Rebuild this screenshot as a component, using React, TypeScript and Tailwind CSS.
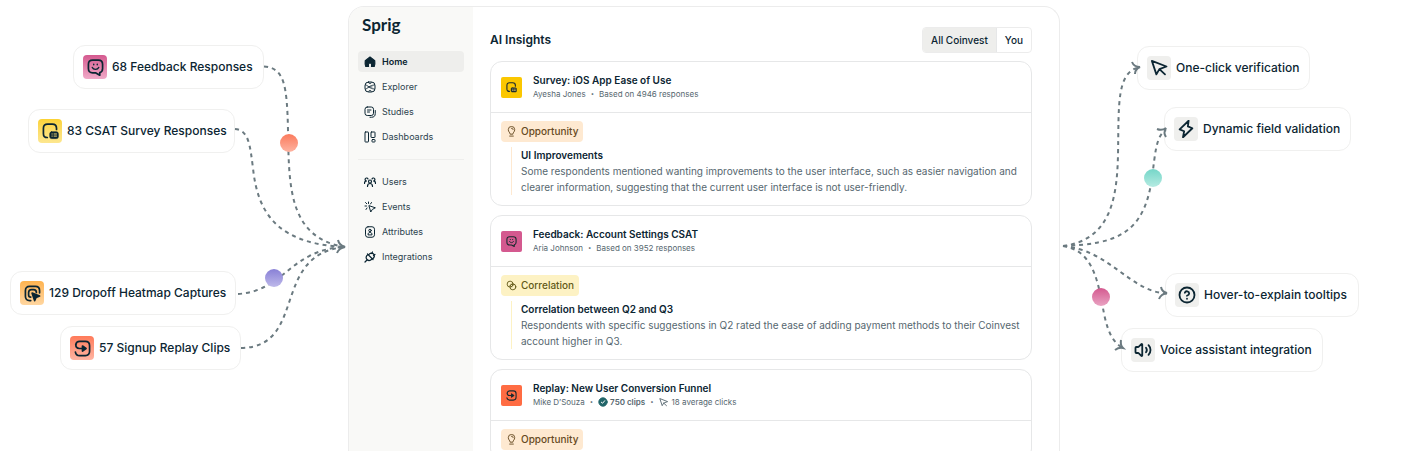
import type { ReactNode } from "react";
import { CircleHelp, Volume2 } from "lucide-react";

type IconProps = { className?: string };

function Svg({ className, children }: { className?: string; children: ReactNode }) {
  return (
    <svg
      viewBox="0 0 24 24"
      fill="none"
      stroke="currentColor"
      strokeWidth={2.4}
      strokeLinecap="round"
      strokeLinejoin="round"
      className={className}
      aria-hidden="true"
    >
      {children}
    </svg>
  );
}

const FeedbackIcon = ({ className }: IconProps) => (
  <Svg className={className}>
    <path d="M12 19.500H8c-4 0-6-2-6-6V7.500c0-4 2-6 6-6h8c4 0 6 2 6 6v6c0 3.500-1.500 5.300-4 5.800V23z" />
    <path d="M7.500 12c1.500 3.500 7.500 3.500 9 0M9.500 7.500v.5M14.500 7.500v.5" strokeWidth={2} />
  </Svg>
);

const SurveyIcon = ({ className }: IconProps) => (
  <Svg className={className}>
    <path d="M7.500 20.500C3.500 20.500 2 18.500 2 15V7.500c0-4 2-6 6-6h6.500c4 0 6 2 6 6V9" />
    <rect x="11" y="12.500" width="12" height="9.500" rx="2.500" fill="currentColor" strokeWidth={1} />
    <path d="M14 15.500h.5M14 18.500h.5M17 15.500h3.500M17 18.500h3.500" stroke="#ffe27a" strokeWidth={1.3} />
  </Svg>
);

const HeatmapIcon = ({ className }: IconProps) => (
  <Svg className={className}>
    <path d="M9.500 22H8c-4 0-6-2-6-6V8c0-4 2-6 6-6h8c4 0 6 2 6 6v3" />
    <path d="M9.500 17C7.500 17 6.500 16 6.500 14v-3.500c0-2.500 1.500-4 4-4h3c2.500 0 4 1.500 4 4" />
    <path d="m11.500 11.500 3.500 10.500 2-4.500 5-2z" fill="currentColor" />
  </Svg>
);

const ReplayIcon = ({ className }: IconProps) => (
  <Svg className={className}>
    <path d="M2.500 6.500C3 3.500 4.500 2 8 2h8c4 0 6 2 6 6v8c0 4-2 6-6 6H8c-3.500 0-5.500-1.500-6-5" />
    <path d="M2.500 6.500C2.500 10.500 4 12 7.500 12H12" />
    <path d="m12 8.500 5 3.500-5 3.500z" fill="currentColor" />
  </Svg>
);

const CursorIcon = ({ className }: IconProps) => (
  <Svg className={className}>
    <path d="m2.500 2.500 6 18 4-7L22 10zM12.500 13.500l7.500 7" />
  </Svg>
);

const ZapIcon = ({ className }: IconProps) => (
  <Svg className={className}>
    <path d="M15.500 1 3.500 12.500l6 2.500-1.500 8L20.500 11l-6-2.500z" />
  </Svg>
);

const HelpIcon = ({ className }: IconProps) => <CircleHelp className={className} strokeWidth={2.4} />;

const VoiceIcon = ({ className }: IconProps) => <Volume2 className={className} strokeWidth={2.4} />;

const CheckBadge = ({ className }: IconProps) => (
  <Svg className={className}>
    <circle cx="12" cy="12" r="10" fill="currentColor" />
    <path d="m8 12.500 3 2.500 5-6" stroke="#fff" />
  </Svg>
);

const HomeIcon = ({ className }: IconProps) => (
  <Svg className={className}>
    <path
      d="M12 2 2.500 9.500C2 14 2 18 3.500 21H9c-1-5 .5-7 3-7s4 2 3 7h5.500c1.500-3 1.500-7 1-11.500z"
      fill="currentColor"
    />
  </Svg>
);

const ExplorerIcon = ({ className }: IconProps) => (
  <Svg className={className}>
    <rect x="2" y="2" width="20" height="20" rx="7" strokeWidth={2} />
    <path d="M3 8c6 0 7 8 18 8M3 16c5 0 7-8 18-8M8 12h8M9 3c0 3 6 3 6 0M9 21c0-3 6-3 6 0" strokeWidth={1.6} />
  </Svg>
);

const StudiesIcon = ({ className }: IconProps) => (
  <Svg className={className}>
    <rect x="2" y="2" width="17" height="17" rx="4.500" strokeWidth={2} />
    <path d="M7 8h7M7 12h4M22.500 9v6c0 5-2.500 7.500-7.500 7.500h-3" strokeWidth={2} />
  </Svg>
);

const DashboardsIcon = ({ className }: IconProps) => (
  <Svg className={className}>
    <g strokeWidth={2}>
      <rect x="2" y="2" width="7" height="20" rx="1" />
      <rect x="14" y="2" width="8" height="11" rx="1" />
      <rect x="16" y="17" width="6" height="5" rx="1" />
    </g>
  </Svg>
);

const UsersIcon = ({ className }: IconProps) => (
  <Svg className={className}>
    <circle cx="12" cy="11" r="3" />
    <path d="M7 21c0-4 2-6 5-6s5 2 5 6M1 15c0-3 1-5 4-5M23 15c0-3-1-5-4-5M8 6a3 3 0 1 0-3 4M16 6a3 3 0 1 1 3 4" />
  </Svg>
);

const EventsIcon = ({ className }: IconProps) => (
  <Svg className={className}>
    <path d="m10 10 3.500 12 3-5 5.500-3zM9 2v3M3 3l2.500 2.500M2 10h3M15 3l-2 3M4 17l2-3" strokeWidth={2} />
  </Svg>
);

const AttributesIcon = ({ className }: IconProps) => (
  <Svg className={className}>
    <g strokeWidth={2}>
      <rect x="3" y="1.500" width="18" height="21" rx="5" />
      <circle cx="12" cy="9" r="2.500" />
      <path d="M8 17c0-3 1.500-4 4-4s4 1 4 4z" />
    </g>
  </Svg>
);

const IntegrationsIcon = ({ className }: IconProps) => (
  <Svg className={className}>
    <path d="m2 22 4.500-4.500M15 5l2-3M19 9l3-2M7 6l11 11M9 8c3-4 7-5 10-2s2 7-2 10M8 7c-4 3-5 7-2 10s7 2 10-1" />
  </Svg>
);

const BulbIcon = ({ className }: IconProps) => (
  <Svg className={className}>
    <path d="M9 17c0-3-4-4-4-9a7 7 0 0 1 14 0c0 5-4 6-4 9zM8 22h8M12 5c2 0 3.500 1 3.500 3" strokeWidth={2} />
  </Svg>
);

const CorrelationIcon = ({ className }: IconProps) => (
  <Svg className={className}>
    <g strokeWidth={2}>
      <circle cx="9" cy="9" r="6.500" />
      <circle cx="15" cy="15" r="6.500" />
      <path d="m9 12 3 3M12 9l3 3" />
    </g>
  </Svg>
);

const chip =
  "absolute flex h-11 items-center gap-[5px] whitespace-nowrap rounded-xl border border-[#f0f0ef] bg-white pl-[9px] text-xs font-medium text-[#0b2532]";

const sources = [
  { label: "68 Feedback Responses", Icon: FeedbackIcon, box: "left-[73px] top-[45px] w-[191px]", tile: "from-[#d4598f] to-[#f0a9c8]" },
  { label: "83 CSAT Survey Responses", Icon: SurveyIcon, box: "left-[28px] top-[109px] w-[207px]", tile: "from-[#fbd233] to-[#fde78f]" },
  { label: "129 Dropoff Heatmap Captures", Icon: HeatmapIcon, box: "left-[10px] top-[271px] w-[226px]", tile: "from-[#ffb34d] to-[#ffd6a0]" },
  { label: "57 Signup Replay Clips", Icon: ReplayIcon, box: "left-[60px] top-[326px] w-[181px]", tile: "from-[#ff7a59] to-[#ffb5a3]" },
];

const outcomes = [
  { label: "One-click verification", Icon: CursorIcon, box: "left-[77px] top-[46px] w-[173px]" },
  { label: "Dynamic field validation", Icon: ZapIcon, box: "left-[104px] top-[107px] w-[187px]" },
  { label: "Hover-to-explain tooltips", Icon: HelpIcon, box: "left-[105px] top-[273px] w-[194px]" },
  { label: "Voice assistant integration", Icon: VoiceIcon, box: "left-[61px] top-[328px] w-[202px]" },
];

const primaryNav = [
  { label: "Home", Icon: HomeIcon, active: true },
  { label: "Explorer", Icon: ExplorerIcon },
  { label: "Studies", Icon: StudiesIcon },
  { label: "Dashboards", Icon: DashboardsIcon },
];

const secondaryNav = [
  { label: "Users", Icon: UsersIcon },
  { label: "Events", Icon: EventsIcon },
  { label: "Attributes", Icon: AttributesIcon },
  { label: "Integrations", Icon: IntegrationsIcon },
];

function Dot({ id, cx, cy, from, to }: { id: string; cx: number; cy: number; from: string; to: string }) {
  return (
    <>
      <linearGradient id={id} x1="0" y1="0" x2="0" y2="1">
        <stop stopColor={from} />
        <stop offset="1" stopColor={to} />
      </linearGradient>
      <circle cx={cx} cy={cy} r="9" fill={`url(#${id})`} stroke="none" />
    </>
  );
}

function Sources() {
  return (
    <section className="relative ml-auto h-full w-[348px]" aria-label="Sources">
      {sources.map(({ label, Icon, box, tile }) => (
        <div key={label} className={`${chip} ${box}`}>
          <span className={`flex size-6 shrink-0 items-center justify-center rounded bg-linear-to-b ${tile}`}>
            <Icon className="size-[17px]" />
          </span>
          {label}
        </div>
      ))}
      <svg viewBox="0 0 348 451" className="absolute left-0 top-0 h-[451px] w-[348px]" fill="none" stroke="#6b7a80" strokeWidth="2" aria-hidden="true">
        <g strokeDasharray="4 4">
          <path d="M264 66.500C284 68 287 84 288 130C289 185 288 238 345 247" />
          <path d="M235 129C249 130 250 146 253 168C258 218 282 244 345 247" />
          <path d="M238 294C285 291 290 249 345 247" />
          <path d="M241 348C308 347 270 254 345 247" />
        </g>
        <path d="M338 240q1 5 7 7q-6 1-8 6" />
        <Dot id="dot-orange" cx={289} cy={143} from="#fb7a5c" to="#feb3a1" />
        <Dot id="dot-violet" cx={274} cy={278} from="#8880d6" to="#beb9ea" />
      </svg>
    </section>
  );
}

function Outcomes() {
  return (
    <section className="relative h-full w-[348px]" aria-label="Outcomes">
      {outcomes.map(({ label, Icon, box }) => (
        <div key={label} className={`${chip} ${box}`}>
          <span className="flex size-6 shrink-0 items-center justify-center rounded bg-[#efefed]">
            <Icon className="size-[18px]" />
          </span>
          {label}
        </div>
      ))}
      <svg viewBox="0 0 348 451" className="absolute left-0 top-0 h-[451px] w-[348px]" fill="none" stroke="#6b7a80" strokeWidth="2" aria-hidden="true">
        <g strokeDasharray="4 4">
          <path d="M3 246C52 240 57 195 58 155C59 105 56 72 80 67" />
          <path d="M3 246C55 244 84 235 92 178C95 155 96 135 106 130" />
          <path d="M3 246C50 250 70 292 107 293.500" />
          <path d="M3 246C30 250 36 275 41 297C45 320 48 340 63 348" />
        </g>
        <path d="M72 62q2 5 8 5q-5 2-5 7" />
        <path d="M97 129q5 2 9-1q-3 5 0 9" />
        <path d="M101 287q1 5 6 6q-6 1-8 6" />
        <path d="M61 340q-1 5 2 8q-4-1-8 2" />
        <Dot id="dot-teal" cx={93} cy={178} from="#75d6c8" to="#b5ebe2" />
        <Dot id="dot-pink" cx={41} cy={297} from="#d4598f" to="#e9a3c2" />
      </svg>
    </section>
  );
}

function NavLinks({ items }: { items: { label: string; Icon: (props: IconProps) => ReactNode; active?: boolean }[] }) {
  return (
    <ul className="flex flex-col gap-1">
      {items.map(({ label, Icon, active }) => (
        <li key={label}>
          <a
            href="#"
            aria-current={active ? "page" : undefined}
            className={`flex h-[21px] items-center gap-1.5 rounded-sm pl-1.5 text-[9px] ${
              active ? "bg-[#eeeeec] font-semibold text-[#0b2532]" : "text-[#2c434e]"
            }`}
          >
            <Icon className="size-3 text-[#0b2532]" />
            {label}
          </a>
        </li>
      ))}
    </ul>
  );
}

const Separator = () => <span className="text-[6px]">•</span>;

function InsightCard({
  title,
  meta,
  icon,
  tile,
  tag,
  heading,
  body,
}: {
  title: string;
  meta: ReactNode;
  icon: ReactNode;
  tile: string;
  tag: "Opportunity" | "Correlation";
  heading?: string;
  body?: string;
}) {
  const opportunity = tag === "Opportunity";

  return (
    <article className="shrink-0 rounded-xl border border-[#e6e7e8]">
      <header className="flex h-[51px] items-center gap-[11px] border-b border-[#e6e7e8] pl-2.5">
        <span className={`flex size-[21px] items-center justify-center rounded-xs text-[#1c2b30] ${tile}`}>{icon}</span>
        <div>
          <h2 className="text-[10px] leading-[14px] font-semibold text-[#0b2532]">{title}</h2>
          <p className="flex items-center gap-[5px] text-[8px] leading-[14px] text-[#56676f]">{meta}</p>
        </div>
      </header>
      <div className="px-2.5 pt-2 pb-2.5">
        <span
          className={`flex h-[21px] w-fit items-center gap-1 rounded px-[5px] text-[10px] font-medium ${
            opportunity ? "bg-[#fee9d1] text-[#664a22]" : "bg-[#fdf2c4] text-[#625a18]"
          }`}
        >
          {opportunity ? <BulbIcon className="size-[11px]" /> : <CorrelationIcon className="size-[11px]" />}
          {tag}
        </span>
        {heading && (
          <div className={`mt-[5px] ml-2.5 border-l pl-[9px] ${opportunity ? "border-[#fee9d1]" : "border-[#fdf2c4]"}`}>
            <h3 className="text-[10px] leading-4 font-semibold text-[#0b2532]">{heading}</h3>
            <p className="text-[10px] leading-4 text-[#56676f]">{body}</p>
          </div>
        )}
      </div>
    </article>
  );
}

function Dashboard() {
  return (
    <div className="mt-1.5 flex overflow-hidden rounded-t-2xl border border-b-0 border-[#ececec]">
      <aside className="w-[124px] shrink-0 bg-[#f9f9f7] px-[9px] pt-2">
        <div className="pl-1 font-['Lato'] text-[17px] leading-5 font-bold text-[#0b2532]">Sprig</div>
        <nav className="mt-4">
          <NavLinks items={primaryNav} />
          <hr className="mt-3 mb-[11px] border-[#eeeeec]" />
          <NavLinks items={secondaryNav} />
        </nav>
      </aside>
      <main className="flex min-w-0 flex-1 flex-col pr-[27px] pl-[17px]">
        <div className="mt-5 mb-2 flex h-[26px] shrink-0 items-center justify-between">
          <h1 className="text-xs font-semibold text-[#0b2532]">AI Insights</h1>
          <div className="flex h-full overflow-hidden rounded border border-[#ececec] text-[10px] font-medium text-[#0b2532]">
            <button type="button" className="border-r border-[#e6e7e8] bg-[#eeeeec] px-2">
              All Coinvest
            </button>
            <button type="button" className="px-2">
              You
            </button>
          </div>
        </div>
        <div className="flex min-h-0 flex-1 flex-col gap-[9px]">
          <InsightCard
            title="Survey: iOS App Ease of Use"
            meta={
              <>
                Ayesha Jones <Separator /> Based on 4946 responses
              </>
            }
            icon={<SurveyIcon className="size-[11px]" />}
            tile="bg-[#fbc700]"
            tag="Opportunity"
            heading="UI Improvements"
            body="Some respondents mentioned wanting improvements to the user interface, such as easier navigation and clearer information, suggesting that the current user interface is not user-friendly."
          />
          <InsightCard
            title="Feedback: Account Settings CSAT"
            meta={
              <>
                Aria Johnson <Separator /> Based on 3952 responses
              </>
            }
            icon={<FeedbackIcon className="size-[11px]" />}
            tile="bg-[#d4598f]"
            tag="Correlation"
            heading="Correlation between Q2 and Q3"
            body="Respondents with specific suggestions in Q2 rated the ease of adding payment methods to their Coinvest account higher in Q3."
          />
          <InsightCard
            title="Replay: New User Conversion Funnel"
            meta={
              <>
                Mike D’Souza <Separator />
                <span className="flex items-center gap-0.5">
                  <CheckBadge className="size-2.5 text-[#216569]" />
                  <b className="font-semibold">750 clips</b>
                </span>
                <Separator />
                <span className="flex items-center gap-1">
                  <CursorIcon className="size-[9px]" /> 18 average clicks
                </span>
              </>
            }
            icon={<ReplayIcon className="size-[11px]" />}
            tile="bg-[#ff6c43]"
            tag="Opportunity"
          />
        </div>
      </main>
    </div>
  );
}

export default function App() {
  return (
    <div className="grid h-screen grid-cols-[minmax(348px,1fr)_minmax(0,712px)_minmax(348px,1fr)] grid-rows-[minmax(0,1fr)] overflow-hidden bg-white font-['Inter',sans-serif]">
      <Sources />
      <Dashboard />
      <Outcomes />
    </div>
  );
}
